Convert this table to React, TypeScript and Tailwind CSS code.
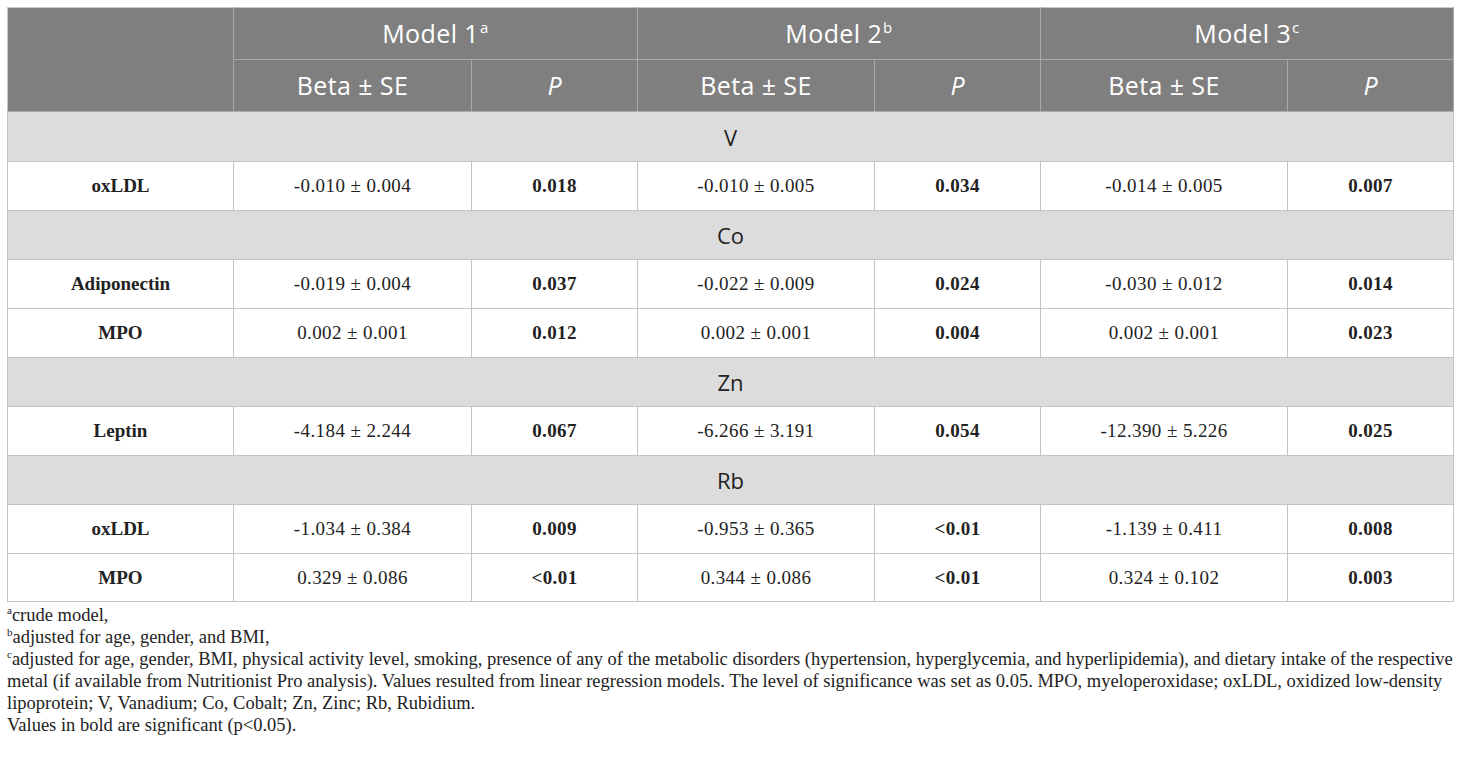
import React from "react";

const sans = { fontFamily: '"Open Sans", "Liberation Sans", sans-serif' };

type Row = { kind: "group"; label: string } | { kind: "data"; label: string; v: string[] };

const rows: Row[] = [
  { kind: "group", label: "V" },
  { kind: "data", label: "oxLDL", v: ["-0.010 ± 0.004", "0.018", "-0.010 ± 0.005", "0.034", "-0.014 ± 0.005", "0.007"] },
  { kind: "group", label: "Co" },
  { kind: "data", label: "Adiponectin", v: ["-0.019 ± 0.004", "0.037", "-0.022 ± 0.009", "0.024", "-0.030 ± 0.012", "0.014"] },
  { kind: "data", label: "MPO", v: ["0.002 ± 0.001", "0.012", "0.002 ± 0.001", "0.004", "0.002 ± 0.001", "0.023"] },
  { kind: "group", label: "Zn" },
  { kind: "data", label: "Leptin", v: ["-4.184 ± 2.244", "0.067", "-6.266 ± 3.191", "0.054", "-12.390 ± 5.226", "0.025"] },
  { kind: "group", label: "Rb" },
  { kind: "data", label: "oxLDL", v: ["-1.034 ± 0.384", "0.009", "-0.953 ± 0.365", "<0.01", "-1.139 ± 0.411", "0.008"] },
  { kind: "data", label: "MPO", v: ["0.329 ± 0.086", "<0.01", "0.344 ± 0.086", "<0.01", "0.324 ± 0.102", "0.003"] },
];

function FnSup({ c }: { c: string }) {
  return <span className="text-[11px] leading-none relative -top-[7px]">{c}</span>;
}

export default function App() {
  return (
    <div className="bg-white w-[1460px] h-[761px] pt-[7px] px-[7px] text-[#222]" style={{ fontFamily: '"Liberation Serif", serif' }}>
      <table className="table-fixed border-collapse w-[1446px]">
        <colgroup>
          <col className="w-[226px]" />
          <col className="w-[238px]" />
          <col className="w-[166px]" />
          <col className="w-[237px]" />
          <col className="w-[166px]" />
          <col className="w-[247px]" />
          <col className="w-[166px]" />
        </colgroup>
        <thead>
          <tr className="h-[52px] bg-[#7f7f7f] text-white text-[25px]" style={sans}>
            <th rowSpan={2} className="border border-[#a9a9a9] border-t-[#c8c8c8] border-l-[#c8c8c8] font-normal"></th>
            {["a", "b", "c"].map((s, i) => (
              <th key={i} colSpan={2} className="border border-[#a9a9a9] border-t-[#c8c8c8] font-normal tracking-[0.4px]">
                Model {i + 1}
                <span className="text-[15px] relative -top-[10px] ml-[1px]">{s}</span>
              </th>
            ))}
          </tr>
          <tr className="h-[52px] bg-[#7f7f7f] text-white text-[25px]" style={sans}>
            {[0, 1, 2].map((i) => (
              <React.Fragment key={i}>
                <th className="border border-[#a9a9a9] font-normal tracking-[0.4px]">Beta ± SE</th>
                <th className="border border-[#a9a9a9] font-normal italic">P</th>
              </React.Fragment>
            ))}
          </tr>
        </thead>
        <tbody>
          {rows.map((r, idx) =>
            r.kind === "group" ? (
              <tr key={idx} className={`${idx === 0 ? "h-[50px]" : "h-[49px]"} bg-[#dcdcdc]`}>
                <td colSpan={7} className="border border-[#c4c4c4] text-center text-[22px] leading-[28px] text-[#222]" style={sans}>
                  {r.label}
                </td>
              </tr>
            ) : (
              <tr key={idx} className={`${idx === rows.length - 1 ? "h-[48px]" : "h-[49px]"} bg-white`}>
                <td className="border border-[#c4c4c4] text-center text-[19px] leading-[24px] font-bold">{r.label}</td>
                {r.v.map((v, j) => (
                  <td key={j} className={`border border-[#c4c4c4] text-center text-[19px] leading-[24px] tracking-[0.4px] ${j % 2 === 1 ? "font-bold" : ""}`}>
                    {v}
                  </td>
                ))}
              </tr>
            )
          )}
        </tbody>
      </table>
      <div className="text-[18.5px] leading-[22px] pt-[2px] text-[#222] whitespace-nowrap">
        <div className="h-[22px]"><FnSup c="a" />crude model,</div>
        <div className="h-[22px]"><FnSup c="b" />adjusted for age, gender, and BMI,</div>
        <div className="h-[22px]"><FnSup c="c" />adjusted for age, gender, BMI, physical activity level, smoking, presence of any of the metabolic disorders (hypertension, hyperglycemia, and hyperlipidemia), and dietary intake of the respective</div>
        <div className="h-[22px]">metal (if available from Nutritionist Pro analysis). Values resulted from linear regression models. The level of significance was set as 0.05. MPO, myeloperoxidase; oxLDL, oxidized low-density</div>
        <div className="h-[22px]">lipoprotein; V, Vanadium; Co, Cobalt; Zn, Zinc; Rb, Rubidium.</div>
        <div className="h-[22px]">Values in bold are significant (p&lt;0.05).</div>
      </div>
    </div>
  );
}
